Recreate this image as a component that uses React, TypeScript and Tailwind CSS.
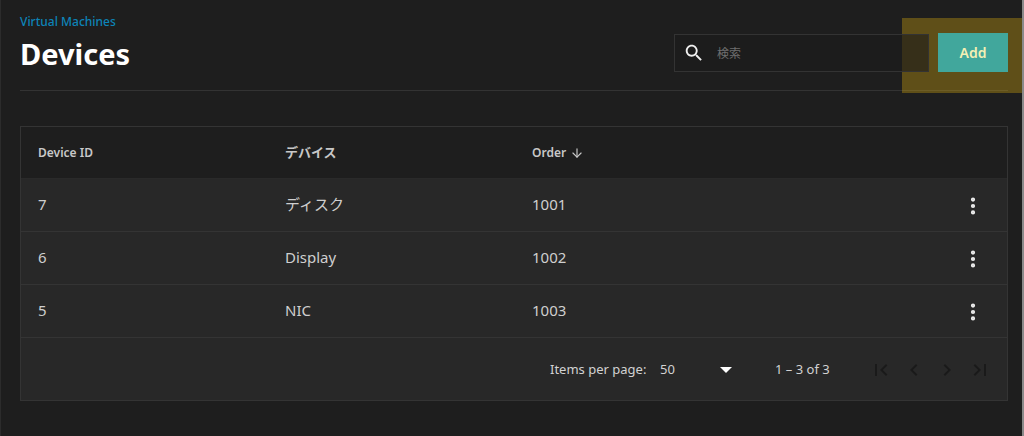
import { ArrowDown, EllipsisVertical } from "lucide-react";

const FONT = "font-['Noto_Sans','Noto_Sans_CJK_JP',sans-serif]";

const ROWS = [
  { id: "7", device: "ディスク", order: "1001" },
  { id: "6", device: "Display", order: "1002" },
  { id: "5", device: "NIC", order: "1003" },
];

const PAGER_ICONS = [
  "M18.41 16.59L13.82 12l4.59-4.59L17 6l-6 6 6 6zM6 6h2v12H6z",
  "M15.41 7.41L14 6l-6 6 6 6 1.41-1.41L10.83 12z",
  "M10 6L8.59 7.41 13.17 12l-4.58 4.59L10 18l6-6z",
  "M5.59 7.41L10.18 12l-4.59 4.59L7 18l6-6-6-6zM16 6h2v12h-2z",
];

function Row({ id, device, order }: { id: string; device: string; order: string }) {
  return (
    <div className="flex h-[53px] items-center border-b border-[#343434] bg-[#282828] pb-[2px] text-[15px] text-[#cfcfcf]">
      <div className="w-[264px] pl-[17px]">{id}</div>
      <div className="w-[247px]">{device}</div>
      <div className="flex-1">{order}</div>
      <EllipsisVertical className="mr-[23px] mt-[3px] h-[22px] w-[22px] text-[#eeeeee]" strokeWidth={2.6} />
    </div>
  );
}

export default function App() {
  return (
    <div className={`${FONT} relative h-[436px] w-[1024px] overflow-hidden bg-[#1e1e1e] pl-5 pr-4`}>
      {/* highlight round the button */}
      <div className="absolute left-[902px] top-[18px] h-[75px] w-[120px] bg-[#e3b20c]/33" />
      {/* window edges */}
      <div className="absolute inset-y-0 left-0 w-px bg-[#2c2c2c]" />
      <div className="absolute inset-y-0 right-0 w-[2px] bg-[#8a8a8a]" />

      <header className="flex h-[91px] items-end justify-between border-b border-[#333333] pb-[18px]">
        <div>
          <div className="text-xs font-medium leading-4 text-[#0d84b8]">Virtual Machines</div>
          <h1 className="mt-[5px] text-[29px] font-bold leading-[37px] text-white">Devices</h1>
        </div>
        <div className="relative flex items-end gap-[9px]">
          <div className="flex h-[38px] w-[255px] items-center border border-[#333333] bg-[#1b1b1b]/60 pl-2">
            <svg viewBox="0 0 24 24" className="h-[22px] w-[22px] fill-[#f0f0f0]">
              <path d="M15.5 14h-.79l-.28-.27C15.41 12.59 16 11.11 16 9.5 16 5.91 13.09 3 9.5 3S3 5.91 3 9.5 5.91 16 9.5 16c1.61 0 3.09-.59 4.23-1.57l.27.28v.79l5 4.99L20.49 19l-4.99-5zm-6 0C7.01 14 5 11.99 5 9.5S7.01 5 9.5 5 14 7.01 14 9.5 11.99 14 9.5 14z" />
            </svg>
            <span className="ml-3 mt-px text-xs text-[#6f6f6f]">検索</span>
          </div>
          <button className="relative h-[39px] w-[70px] bg-[#41a79c] text-sm font-semibold text-[#f4f0b4]">Add</button>
        </div>
      </header>

      <section className="mt-[35px] border border-[#343434]">
        <div className="flex h-[52px] items-center border-b border-[#2a2a2a] bg-[#1e1e1e] text-xs font-semibold text-[#c8c8c8]">
          <div className="w-[264px] pl-[17px]">Device ID</div>
          <div className="w-[247px] text-[13px]">デバイス</div>
          <div className="flex items-center gap-1">
            Order <ArrowDown className="h-[14px] w-[14px]" />
          </div>
        </div>
        {ROWS.map((r) => (
          <Row key={r.id} {...r} />
        ))}
        <div className="flex h-[62px] items-center bg-[#282828] pt-px text-[13px] text-[#d2d2d2]">
          <div className="ml-[529px] w-[110px]">Items per page:</div>
          <div className="w-[60px]">50</div>
          <div className="h-0 w-0 border-x-[6px] border-t-[6px] border-x-transparent border-t-white" />
          <div className="ml-[43px] w-[94px]">1 – 3 of 3</div>
          <div className="flex gap-[9px]">
            {PAGER_ICONS.map((d) => (
              <svg key={d} viewBox="0 0 24 24" className="h-6 w-6 fill-[#1a1a1a]">
                <path d={d} />
              </svg>
            ))}
          </div>
        </div>
      </section>
    </div>
  );
}
